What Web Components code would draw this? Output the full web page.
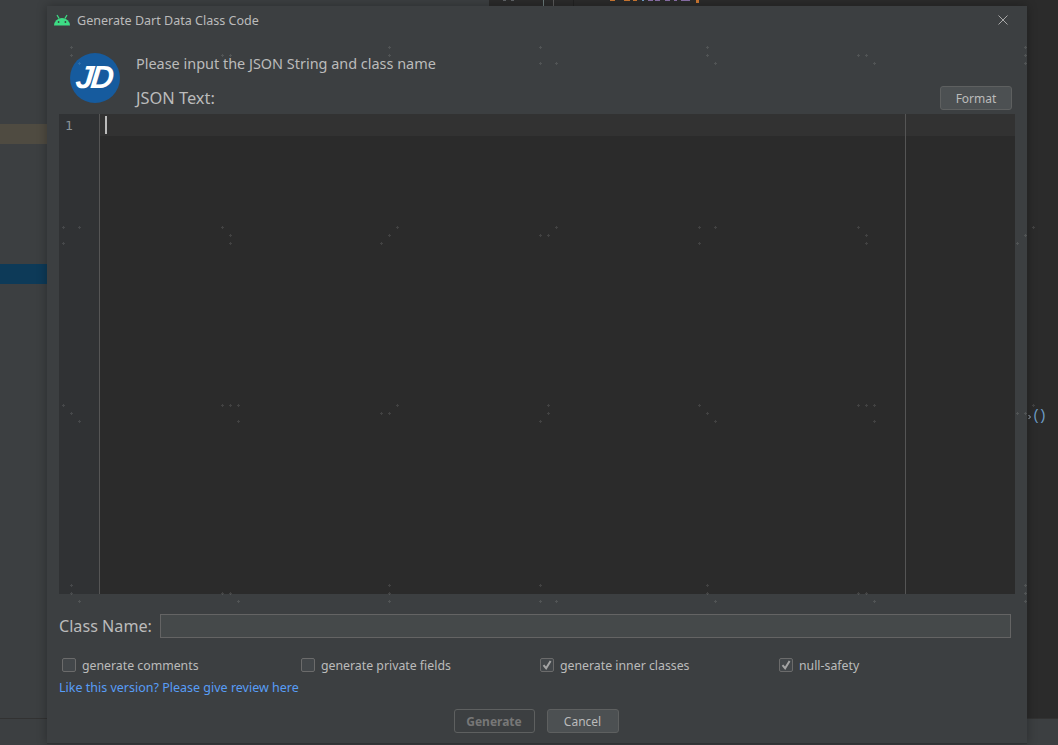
<!DOCTYPE html>
<html>
<head>
<meta charset="utf-8">
<title>Generate Dart Data Class Code</title>
<style>
  html, body { margin: 0; height: 745px; overflow: hidden; background: #3c3f41; }
  body { font-family: "Noto Sans", "Open Sans", sans-serif; color: #bbbbbb; }
</style>
</head>
<body>
<ide-backdrop>
  <gen-dialog>
    <span slot="title">Generate Dart Data Class Code</span>
    <span slot="prompt">Please input the JSON String and class name</span>
    <span slot="json-label">JSON Text:</span>
    <ide-button slot="format">Format</ide-button>
    <json-editor slot="editor"></json-editor>
    <span slot="class-label">Class Name:</span>
    <check-box slot="options">generate comments</check-box>
    <check-box slot="options">generate private fields</check-box>
    <check-box slot="options" checked>generate inner classes</check-box>
    <check-box slot="options" checked>null-safety</check-box>
    <span slot="link">Like this version? Please give review here</span>
    <ide-button slot="actions" disabled>Generate</ide-button>
    <ide-button slot="actions">Cancel</ide-button>
  </gen-dialog>
</ide-backdrop>
<watermark-dots></watermark-dots>

<script>
// IDE window that sits behind the dialog
class IdeBackdrop extends HTMLElement {
  constructor() {
    super();
    this.attachShadow({ mode: 'open' });
    this.shadowRoot.innerHTML = `
      <style>
        :host { display: grid; grid-template-columns: 489px 1fr; grid-template-rows: 719px 26px; width: 1058px; height: 745px; position: relative; overflow: hidden; }
        .tree { padding-top: 124px; box-sizing: border-box; background: #3c3f41; border-bottom: 1px solid #323232; }
        .band { height: 20px; background: #4f4b41; }
        .band.sel { margin-top: 120px; background: #0d3a58; }
        .code { position: relative; background: #2b2b2b; box-sizing: border-box; padding: 408px 0 0 543px; border-bottom: 1px solid #323232;
          font: 14px "Liberation Mono", monospace; letter-spacing: -2px; color: #6f9fc9; line-height: 17px; }
        .top { display: block; position: absolute; left: 0; top: 0; }
        .status { grid-column: 1 / 3; background: #3c3f41; }
        .dlg { position: absolute; left: 47px; top: 6px; width: 980px; height: 738px; }
      </style>
      <div class="tree"><div class="band"></div><div class="band sel"></div></div>
      <div class="code">
        <svg class="top" width="569" height="420">
          <path d="M14 0h3v1h-3zM22 0h3v1h-3z" fill="#606366"/>
          <rect x="54" y="0" width="1" height="6" fill="#6a7a7a"/>
          <rect x="64" y="0" width="1" height="6" fill="#5a5a5a"/>
          <rect x="84" y="0" width="1" height="6" fill="#222222"/>
          <path d="M121 0h5v1h-5zM135 0h6v1h-6zM144 0h4v1h-4zM207 0h3v3h-3z" fill="#cc7832"/>
          <path d="M153 0h2v1h-2z" fill="#6f9fc9"/>
          <path d="M159 0h5v1h-5zM166 0h5v1h-5zM176 0h5v1h-5zM185 0h3v1h-3zM192 0h9v1h-9z" fill="#8a6fa8"/>
          <path d="M539.5 415l2 2-2 2" stroke="#a9b7c6" fill="none"/>
        </svg>
        ()
      </div>
      <div class="status"></div>
      <div class="dlg"><slot></slot></div>
    `;
  }
}

// The dialog frame, with named slots for every row
class GenDialog extends HTMLElement {
  constructor() {
    super();
    this.attachShadow({ mode: 'open' });
    this.shadowRoot.innerHTML = `
      <style>
        :host { display: flex; flex-direction: column; width: 980px; height: 738px; box-sizing: border-box; background: #3c3f41;
          box-shadow: 0 0 10px rgba(0,0,0,.3); border-bottom: 1px solid #2f3133; font-size: 12.5px; color: #bbbbbb; }
        .title { display: flex; align-items: center; height: 28px; padding: 0 19px 0 7px; font-size: 12.55px; gap: 7px; flex: none; }
        .title .grow { flex: 1; }
        .title svg { display: block; }
        .head { display: flex; gap: 16px; height: 80px; box-sizing: border-box; padding: 19px 15px 4px 23px; flex: none; }
        .logo { width: 50px; height: 50px; border-radius: 50%; background: #165b9e; color: #fff; flex: none; display: flex; align-items: center; justify-content: center;
          font: italic 700 32px/48px "Liberation Sans", sans-serif; letter-spacing: -3px; }
        .logo span { margin: -3px 0 0 -3px; transform: skewX(-6deg); }
        .texts { flex: 1; display: flex; flex-direction: column; justify-content: space-between; font-size: 14.45px; line-height: 20px; }
        .prompt { padding-top: 1px; }
        .json-row { display: flex; justify-content: space-between; align-items: flex-start; height: 24px; font-size: 16.4px; line-height: 24px; }
        .editor { padding: 0 12px; flex: none; }
        .class-row { display: flex; align-items: center; gap: 8px; height: 24px; margin-top: 20px; padding: 0 16px 0 12px; font-size: 16.15px; flex: none; }
        .class-input { flex: 1; height: 24px; box-sizing: border-box; background: #45494a; border: 1px solid #646464; }
        .options { display: grid; grid-template-columns: repeat(4, 239px); height: 20px; align-items: center; margin-top: 17px; padding-left: 15px; flex: none; }
        .link { height: 18px; line-height: 18px; margin-top: 4px; padding-left: 12px; color: #589df6; flex: none; }
        .actions { display: flex; justify-content: center; gap: 12px; margin-top: 12px; padding-right: 2px; flex: none; }
      </style>
      <div class="title">
        <svg width="16" height="12" viewBox="0 0 16 12">
          <path d="M0 11.5a8 7.6 0 0 1 16 0z" fill="#3ddc84"/>
          <path d="M3 1l2 3.4M13 1l-2 3.4" stroke="#3ddc84" stroke-width="1.2" fill="none"/>
          <circle cx="4.6" cy="8" r=".9" fill="#3c3f41"/>
          <circle cx="11.4" cy="8" r=".9" fill="#3c3f41"/>
        </svg>
        <slot name="title"></slot>
        <span class="grow"></span>
        <svg width="10" height="10" viewBox="0 0 10 10"><path d="M.5 .5l9 9M9.5 .5l-9 9" stroke="#a8a8a8" stroke-width="1" fill="none"/></svg>
      </div>
      <div class="head">
        <div class="logo"><span>JD</span></div>
        <div class="texts">
          <div class="prompt"><slot name="prompt"></slot></div>
          <div class="json-row"><slot name="json-label"></slot><slot name="format"></slot></div>
        </div>
      </div>
      <div class="editor"><slot name="editor"></slot></div>
      <div class="class-row"><slot name="class-label"></slot><div class="class-input"></div></div>
      <div class="options"><slot name="options"></slot></div>
      <div class="link"><slot name="link"></slot></div>
      <div class="actions"><slot name="actions"></slot></div>
    `;
  }
}

// Empty code editor with gutter, caret row and right margin line
class JsonEditor extends HTMLElement {
  constructor() {
    super();
    this.attachShadow({ mode: 'open' });
    this.shadowRoot.innerHTML = `
      <style>
        :host { display: flex; height: 480px; background: #2b2b2b; font: 13px/24px "DejaVu Sans Mono", monospace; }
        .gutter { width: 41px; box-sizing: border-box; background: #303234; border-right: 1px solid #555555; padding-left: 6px; color: #8a9499; flex: none; }
        .body { flex: 1; position: relative; }
        .line { height: 22px; background: #323232; display: flex; align-items: center; padding-left: 5px; }
        .caret { width: 2px; height: 18px; background: #bbbbbb; }
        .margin { position: absolute; left: 805px; top: 0; bottom: 0; width: 1px; background: #555555; }
      </style>
      <div class="gutter">1</div>
      <div class="body">
        <div class="line"><div class="caret"></div></div>
        <div class="margin"></div>
      </div>
    `;
  }
}

// Swing style checkbox with its label slotted in
class CheckBox extends HTMLElement {
  constructor() {
    super();
    this.attachShadow({ mode: 'open' });
    const tick = this.hasAttribute('checked')
      ? '<svg width="14" height="14" viewBox="0 0 14 14"><path d="M3.5 7.2l2.6 3L10.6 3" stroke="#a4a4a4" stroke-width="2" fill="none"/></svg>'
      : '';
    this.shadowRoot.innerHTML = `
      <style>
        :host { display: flex; align-items: center; gap: 6px; font-size: 12.3px; white-space: nowrap; }
        .box { width: 14px; height: 14px; box-sizing: border-box; background: #43474a; border: 1px solid #6b6b6b; border-radius: 2px; position: relative; flex: none; }
        svg { display: block; margin: -1px; }
      </style>
      <div class="box">${tick}</div>
      <slot></slot>
    `;
  }
}

// Dialog button, the disabled state has no fill and bold grey text
class IdeButton extends HTMLElement {
  constructor() {
    super();
    this.attachShadow({ mode: 'open' });
    this.shadowRoot.innerHTML = `
      <style>
        :host { display: inline-flex; align-items: center; justify-content: center; height: 24px; box-sizing: border-box; width: 72px; padding-top: 1px;
          background: #4c5052; border: 1px solid #5e6060; border-radius: 3px; font-size: 12px; line-height: 16px; color: #bbbbbb; }
        :host([disabled]) { background: transparent; color: #777777; font-weight: 700; width: 81px; }
      </style>
      <slot></slot>
    `;
  }
}

// Faint specks that lie over the whole screenshot
const SPECKS = [
  [47,[71,540,707,1025,389]], [55,[71,222,230,389,707,858,866,1025]], [63,[79,238,389,540,556,715,874,1025]],
  [227,[63,79,222,397,556,699,715,858,1033]], [235,[230,389,540,548,866,1025]], [243,[63,230,381,699,866,1017]],
  [405,[63,222,230,238,397,548,699,858,866,874,1033]], [413,[71,381,389,548,707,1017,1025]], [421,[79,238,540,715,874]],
  [585,[71,389,540,707,1025]], [593,[71,222,230,389,707,858,866,1025]], [601,[79,238,389,540,556,715,874,1025]]
];

class WatermarkDots extends HTMLElement {
  constructor() {
    super();
    this.attachShadow({ mode: 'open' });
    let d = '';
    for (const [y, xs] of SPECKS) {
      for (const x of xs) d += `M${x} ${y - 1}h1v3h-1zM${x - 1} ${y}h1v1h-1zM${x + 1} ${y}h1v1h-1z`;
    }
    this.shadowRoot.innerHTML = `
      <style>
        :host { display: block; position: absolute; left: 0; top: 0; pointer-events: none; }
        svg { display: block; }
      </style>
      <svg width="1058" height="745"><path d="${d}" fill="#ffffff" fill-opacity=".11"/></svg>
    `;
  }
}

customElements.define('ide-backdrop', IdeBackdrop);
customElements.define('gen-dialog', GenDialog);
customElements.define('json-editor', JsonEditor);
customElements.define('check-box', CheckBox);
customElements.define('ide-button', IdeButton);
customElements.define('watermark-dots', WatermarkDots);
</script>
</body>
</html>
